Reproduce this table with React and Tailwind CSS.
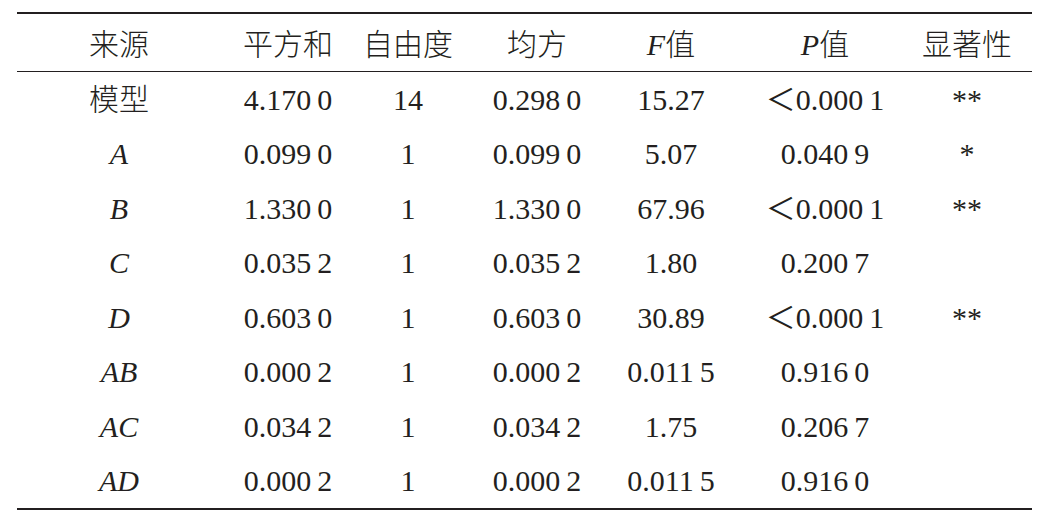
import React from 'react'

// ANOVA table rows: source, sum of squares, df, mean square, F, P, significance
const rows = [
  { src: '模型', cn: true, ss: '4.170\u20090', df: '14', ms: '0.298\u20090', f: '15.27', p: '＜0.000\u20091', sig: '**' },
  { src: 'A', ss: '0.099\u20090', df: '1', ms: '0.099\u20090', f: '5.07', p: '0.040\u20099', sig: '*' },
  { src: 'B', ss: '1.330\u20090', df: '1', ms: '1.330\u20090', f: '67.96', p: '＜0.000\u20091', sig: '**' },
  { src: 'C', ss: '0.035\u20092', df: '1', ms: '0.035\u20092', f: '1.80', p: '0.200\u20097', sig: '' },
  { src: 'D', ss: '0.603\u20090', df: '1', ms: '0.603\u20090', f: '30.89', p: '＜0.000\u20091', sig: '**' },
  { src: 'AB', ss: '0.000\u20092', df: '1', ms: '0.000\u20092', f: '0.011\u20095', p: '0.916\u20090', sig: '' },
  { src: 'AC', ss: '0.034\u20092', df: '1', ms: '0.034\u20092', f: '1.75', p: '0.206\u20097', sig: '' },
  { src: 'AD', ss: '0.000\u20092', df: '1', ms: '0.000\u20092', f: '0.011\u20095', p: '0.916\u20090', sig: '' },
]

const grid = 'grid grid-cols-[204px_134px_106px_152px_116px_192px_92px] items-center text-center'

function App() {
  return (
    <div
      className="w-[1057px] h-[526px] bg-white text-[#231f20] pt-[12px]"
      style={{ fontFamily: '"Liberation Serif", "Noto Sans CJK SC", serif' }}
    >
      <div className="ml-[17px] w-[1015px] border-t-2 border-b-2 border-[#231f20] text-[30px] leading-none">
        {/* Header */}
        <div className={`${grid} h-[58px] pt-[4px] border-b border-[#231f20] font-light`}>
          <div>来源</div>
          <div>平方和</div>
          <div>自由度</div>
          <div>均方</div>
          <div><span className="italic">F</span>值</div>
          <div><span className="italic">P</span>值</div>
          <div>显著性</div>
        </div>

        {/* Body */}
        {rows.map((r) => (
          <div key={r.src} className={`${grid} h-[54.5px] pt-[1px]`}>
            <div className={r.cn ? 'font-light' : 'italic'}>{r.src}</div>
            <div>{r.ss}</div>
            <div>{r.df}</div>
            <div>{r.ms}</div>
            <div>{r.f}</div>
            <div>{r.p}</div>
            <div>{r.sig}</div>
          </div>
        ))}
      </div>
    </div>
  )
}

export default App
